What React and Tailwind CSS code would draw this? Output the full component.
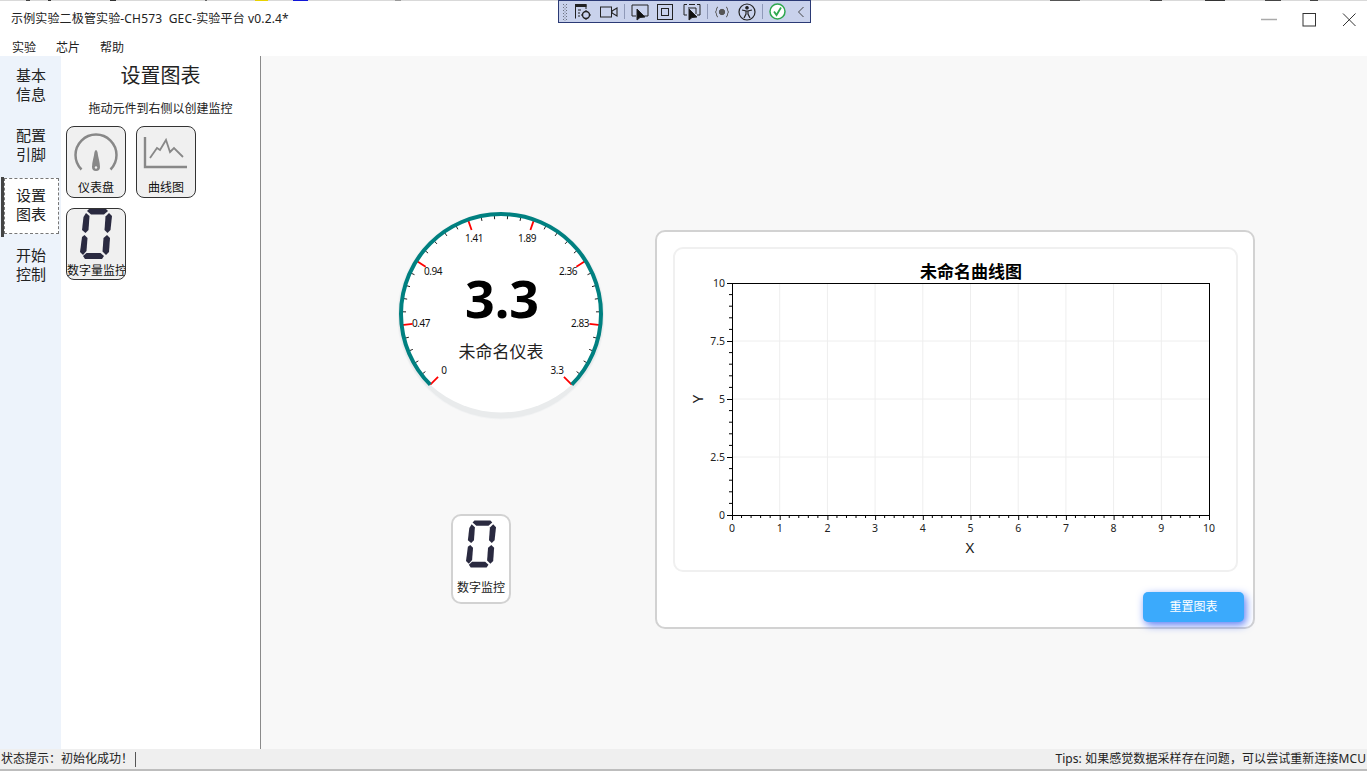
import React from 'react';

const FONT = { fontFamily: '"Noto Sans", "Noto Sans CJK SC", sans-serif' };

function Zero({ className }) {
  return (
    <svg viewBox="0 0 32 50" className={className} fill="#2a2a40">
      <polygon points="7,2 9,0 26,0 28,2 24,5.500 11,5.500" />
      <polygon points="3.500,8 6,4 9.500,7 8.500,21 5.500,24 2,21" />
      <polygon points="29,4 32,7 30.500,21 27.500,24 24.500,21 25.500,7.500" />
      <polygon points="2,28 4.500,26 7.500,29 6.500,42 3,46 0,43" />
      <polygon points="27,26 30,29 29,43 26,46 22.500,42.500 23.500,29" />
      <polygon points="3,47 6.500,44 20.500,44 24,47 22,50 5,50" />
    </svg>
  );
}

function GaugeIcon() {
  return (
    <svg width="48" height="42" viewBox="0 0 48 42" fill="none">
      <path d="M9.500 36.500 A20.500 20.500 0 1 1 38.500 36.500" stroke="#888" strokeWidth="2.500" />
      <path d="M22.500 19 Q24 15 25.500 19 C26 24 28 29 28 34 A4 4 0 0 1 20 34 C20 29 22 24 22.500 19 Z" fill="#888" />
      <circle cx="24" cy="34.500" r="1.200" fill="#f0f0f0" />
    </svg>
  );
}

function ChartIcon() {
  return (
    <svg width="48" height="36" viewBox="0 0 48 36" fill="none" stroke="#888">
      <path d="M3 4 V34 H45" strokeWidth="2.400" />
      <path d="M8 25 L15 15 L18 17 L24 7 L28 19 L32 15 L41 24" strokeWidth="1.800" />
    </svg>
  );
}

function ToolBar() {
  const stroke = { fill: 'none', stroke: '#222', strokeWidth: 1 };
  return (
    <div className="absolute left-[558px] top-0 z-10 flex h-[23px] w-[253px] items-center border border-[#2b3a75] bg-[#c9d2ec]">
      <svg width="8" height="18" viewBox="0 0 8 18" className="ml-[3px]" fill="#6b7280">
        {[1, 4, 7, 10, 13, 16].map((y) => (
          <g key={y}>
            <rect x="1" y={y} width="1" height="1" />
            <rect x="4" y={y} width="1" height="1" />
            <rect x="2.500" y={y + 1.500} width="1" height="1" />
          </g>
        ))}
      </svg>
      <svg width="18" height="18" viewBox="0 0 18 18" className="ml-[4px]" {...stroke}>
        <path d="M1.500 15.500 V1.500 H12 V6" />
        <rect x="1.500" y="1.500" width="10.500" height="2" fill="#222" />
        <path d="M4 7 H7 M4 10 H6 M4 13 H6" />
        <circle cx="12" cy="12" r="3.500" strokeWidth="1.400" />
        <path d="M12 7 V9 M12 15 V17 M7 12 H9 M15 12 H17" />
      </svg>
      <svg width="18" height="14" viewBox="0 0 18 14" className="ml-[8px]" {...stroke}>
        <rect x="0.500" y="2" width="11" height="10" />
        <path d="M12 6 L17 3 V11 L12 8 Z" strokeWidth="1.100" />
      </svg>
      <div className="ml-[6px] h-[15px] w-px bg-[#8f99b8]" />
      <svg width="18" height="18" viewBox="0 0 18 18" className="ml-[6px]" {...stroke}>
        <path d="M5 13 H1 V2 H17 V13 H12" />
        <path d="M6 6 V17 L9 14.500 L14 14 Z" fill="#111" />
      </svg>
      <svg width="16" height="16" viewBox="0 0 16 16" className="ml-[8px]" {...stroke}>
        <rect x="0.500" y="0.500" width="15" height="15" />
        <rect x="4.500" y="4.500" width="7" height="7" />
      </svg>
      <svg width="18" height="18" viewBox="0 0 18 18" className="ml-[10px]" {...stroke}>
        <path d="M4 1.500 H1 V12 H4 M14 1.500 H17 V12 H14 M6 1.500 H12" />
        <path d="M5 5 H13 V11" />
        <path d="M6 6 V17 L9 14.500 L14 14 Z" fill="#111" />
      </svg>
      <div className="ml-[6px] h-[15px] w-px bg-[#8f99b8]" />
      <svg width="14" height="12" viewBox="0 0 14 12" className="ml-[7px]" fill="none" stroke="#555">
        <path d="M3 1 C1 1 2 5 0.500 6 C2 7 1 11 3 11 M11 1 C13 1 12 5 13.500 6 C12 7 13 11 11 11" />
        <circle cx="7" cy="6" r="2.700" fill="#555" />
      </svg>
      <svg width="18" height="18" viewBox="0 0 18 18" className="ml-[9px]" {...stroke} strokeWidth="1.200">
        <circle cx="9" cy="9" r="8" />
        <circle cx="9" cy="4.800" r="1.200" fill="#222" />
        <path d="M4 7 L8 8 V11 L6 15 M14 7 L10 8 V11 L12 15 M8 8 H10" />
      </svg>
      <div className="ml-[6px] h-[15px] w-px bg-[#8f99b8]" />
      <svg width="17" height="17" viewBox="0 0 17 17" className="ml-[6px]" fill="none">
        <circle cx="8.500" cy="8.500" r="7.500" fill="#fff" stroke="#2fa84f" strokeWidth="1.500" />
        <path d="M5 8.500 L7.500 12 L12 4.500" stroke="#2fa84f" strokeWidth="1.800" />
      </svg>
      <svg width="8" height="12" viewBox="0 0 8 12" className="ml-[11px]" fill="none" stroke="#444">
        <path d="M6.500 1 L1.500 6 L6.500 11" />
      </svg>
    </div>
  );
}

function TopStrip() {
  const bits = [
    [26, 4, '#444'], [48, 3, '#333'], [110, 6, '#333'], [205, 2, '#666'],
    [255, 13, '#e8d200'], [293, 15, '#1016d8'], [395, 6, '#999'],
    [1050, 30, '#555'], [1150, 12, '#444'], [1205, 20, '#333'], [1265, 16, '#444'], [1310, 8, '#444'],
  ];
  return (
    <div className="flex h-px bg-[#d9d9d9]">
      {bits.map(([x, w, c], i) => (
        <div
          key={x}
          style={{ marginLeft: i === 0 ? x : x - bits[i - 1][0] - bits[i - 1][1], width: w, background: c }}
        />
      ))}
    </div>
  );
}

function TitleBar() {
  return (
    <div className="flex h-[37px] items-center bg-white pl-[11px] text-[12px] text-[#222]">
      <span className="-mt-[1px] tracking-[0.15px]">示例实验二极管实验-CH573&nbsp;&nbsp;GEC-实验平台 v0.2.4*</span>
      <div className="ml-auto flex items-center">
        <svg width="127" height="36" viewBox="0 0 127 36" fill="none">
          <path d="M21 17.500 H37" stroke="#aaa" strokeWidth="1.500" />
          <rect x="63" y="11.500" width="12.500" height="12.500" stroke="#333" />
          <path d="M103 11.500 L115.500 24 M115.500 11.500 L103 24" stroke="#333" />
        </svg>
      </div>
    </div>
  );
}

function Menu() {
  return (
    <div className="flex h-[18px] items-center gap-[20px] bg-white pl-[12px] pt-[2px] text-[12px] text-[#222]">
      <span>实验</span>
      <span>芯片</span>
      <span>帮助</span>
    </div>
  );
}

function Rail() {
  const items = [['基本', '信息'], ['配置', '引脚'], ['设置', '图表'], ['开始', '控制']];
  return (
    <div className="w-[61px] shrink-0 bg-[#edf3fb] pt-px">
      {items.map(([a, b], i) => (
        <div key={a} className="h-[60px] text-[15px] leading-[19px] text-[#222]">
          {i === 2 ? (
            <div className="relative ml-[1px] flex h-[60px] items-center">
              <div className="h-full w-[3px] bg-[#444]" />
              <div className="mb-[2px] h-[56px] w-[55px] border border-dashed border-[#777] bg-white pl-[11px] pt-[7px]">
                {a}<br />{b}
              </div>
            </div>
          ) : (
            <div className="pl-[16px] pt-[9px]">{a}<br />{b}</div>
          )}
        </div>
      ))}
    </div>
  );
}

function Tool({ label, children, tight }) {
  return (
    <div className="relative flex h-[72px] w-[60px] flex-col items-center overflow-hidden rounded-[8px] border border-[#333] bg-[#f0f0f0]">
      <div className={tight ? 'mt-0' : 'mt-[6px]'}>{children}</div>
      <span className={`absolute w-full whitespace-nowrap text-center text-[12px] leading-[16px] text-[#111] ${tight ? 'bottom-0' : 'bottom-[1px]'}`}>
        {label}
      </span>
    </div>
  );
}

function Panel() {
  return (
    <div className="w-[200px] shrink-0 border-r border-[#8a8a8a] bg-white">
      <div className="pt-[6px] text-center text-[20px] leading-[27px] text-[#222]">设置图表</div>
      <div className="mt-[12px] text-center text-[12px] leading-[16px] text-[#222]">拖动元件到右侧以创建监控</div>
      <div className="ml-[5px] mt-[9px] flex flex-wrap gap-[10px]">
        <Tool label="仪表盘"><GaugeIcon /></Tool>
        <Tool label="曲线图"><ChartIcon /></Tool>
        <Tool label="数字量监控" tight><Zero className="h-[50px] w-[32px]" /></Tool>
      </div>
    </div>
  );
}

function Gauge() {
  const cx = 103;
  const cy = 102;
  const pos = (deg, r) => {
    const a = (deg * Math.PI) / 180;
    return [cx + r * Math.cos(a), cy - r * Math.sin(a)];
  };
  const step = 270 / 7;
  const labels = [
    ['0', 46, 158], ['0.47', 23, 111], ['0.94', 35, 59], ['1.41', 76, 26],
    ['1.89', 129, 26], ['2.36', 170, 59], ['2.83', 182, 111], ['3.3', 159, 158],
  ];
  const ticks = [];
  for (let i = 0; i <= 35; i++) {
    const deg = 225 - (i * step) / 5;
    const major = i % 5 === 0;
    const [x1, y1] = pos(deg, 100);
    const [x2, y2] = pos(deg, major ? 89 : 95);
    ticks.push(
      <line key={i} x1={x1} y1={y1} x2={x2} y2={y2} stroke={major ? '#f00' : '#222'} strokeWidth={major ? 1.800 : 1} />
    );
  }
  const [sx, sy] = pos(225, 100);
  const [ex, ey] = pos(-45, 100);
  return (
    <svg width="206" height="208" viewBox="0 0 206 208" className="block">
      <circle cx={cx} cy={cy + 1.500} r="104" fill="#f2f3f4" />
      <circle cx={cx} cy={cy + 1.500} r="103" fill="#e9ebec" />
      <path d={`M${sx} ${sy} A100 100 0 1 1 ${ex} ${ey} A104 104 0 0 1 ${sx} ${sy} Z`} fill="#fff" />
      {ticks}
      <path d={`M${sx} ${sy} A100 100 0 1 1 ${ex} ${ey}`} fill="none" stroke="#008080" strokeWidth="4" />
      {labels.map(([t, x, y]) => (
        <text key={t} x={x} y={y} textAnchor="middle" dominantBaseline="central" fontSize="10" letterSpacing="-0.4" fill="#111">{t}</text>
      ))}
      <text x={cx + 1} y="85" textAnchor="middle" dominantBaseline="central" fontSize="52" fontWeight="700" fill="#000">3.3</text>
      <text x={cx} y="139" textAnchor="middle" dominantBaseline="central" fontSize="17" fill="#222">未命名仪表</text>
    </svg>
  );
}

function Digital() {
  return (
    <div className="flex h-[90px] w-[60px] flex-col items-center rounded-[10px] border-2 border-[#d2d2d2] bg-white">
      <Zero className="mt-[4px] h-[48px] w-[30px]" />
      <span className="mt-[12px] text-[12px] leading-[16px] text-[#222]">数字监控</span>
    </div>
  );
}

function Plot() {
  const x0 = 57;
  const x1 = 534;
  const y0 = 266;
  const y1 = 34;
  const xs = Array.from({ length: 11 }, (_, i) => x0 + (i * (x1 - x0)) / 10);
  const ys = Array.from({ length: 5 }, (_, i) => y0 - (i * (y0 - y1)) / 4);
  const yText = ['0', '2.5', '5', '7.5', '10'];
  const minorX = [];
  for (let i = 0; i <= 50; i++) if (i % 5) minorX.push(x0 + (i * (x1 - x0)) / 50);
  const minorY = [];
  for (let i = 0; i <= 20; i++) if (i % 5) minorY.push(y0 - (i * (y0 - y1)) / 20);
  return (
    <svg width="560" height="320" viewBox="0 0 560 320" className="block">
      <text x="296" y="22" textAnchor="middle" dominantBaseline="central" fontSize="17" fontWeight="700" fill="#000">未命名曲线图</text>
      {xs.slice(1, -1).map((x) => <line key={x} x1={x} x2={x} y1={y1} y2={y0} stroke="#eee" />)}
      {ys.slice(1, -1).map((y) => <line key={y} x1={x0} x2={x1} y1={y} y2={y} stroke="#eee" />)}
      <rect x={x0 + 0.500} y={y1 + 0.500} width={x1 - x0} height={y0 - y1} fill="none" stroke="#000" />
      {xs.map((x, i) => (
        <g key={x}>
          <line x1={x + 0.500} x2={x + 0.500} y1={y0} y2={y0 + 5} stroke="#000" />
          <text x={x} y={y0 + 13} textAnchor="middle" dominantBaseline="central" fontSize="10.500" fill="#222">{i}</text>
        </g>
      ))}
      {minorX.map((x) => <line key={x} x1={x} x2={x} y1={y0} y2={y0 + 3} stroke="#000" />)}
      {ys.map((y, i) => (
        <g key={y}>
          <line x1={x0 - 5} x2={x0} y1={y + 0.500} y2={y + 0.500} stroke="#000" />
          <text x={x0 - 7} y={y} textAnchor="end" dominantBaseline="central" fontSize="10.500" fill="#222">{yText[i]}</text>
        </g>
      ))}
      {minorY.map((y) => <line key={y} x1={x0 - 3} x2={x0} y1={y} y2={y} stroke="#000" />)}
      <text x="295" y="298" textAnchor="middle" dominantBaseline="central" fontSize="15" fill="#222">X</text>
      <text x="22" y="150" textAnchor="middle" dominantBaseline="central" fontSize="15" fill="#222" transform="rotate(-90 22 150)">Y</text>
    </svg>
  );
}

function ChartCard() {
  return (
    <div className="flex h-[399px] w-[600px] flex-col rounded-[10px] border-2 border-[#d2d2d2] bg-white pl-[16px] pt-[15px]">
      <div className="h-[325px] w-[565px] overflow-hidden rounded-[10px] border-2 border-[#f0f0f0]">
        <Plot />
      </div>
      <div className="flex justify-end pr-[9px] pt-[20px]">
        <button className="h-[30px] w-[101px] rounded-[5px] bg-[#3baafc] text-[12px] text-white shadow-[2px_3px_8px_#5a7cf5]">
          重置图表
        </button>
      </div>
    </div>
  );
}

function Canvas() {
  return (
    <div className="flex flex-1 items-start bg-[#f8f8f8] pl-[137px] pt-[156px]">
      <div className="flex w-[257px] shrink-0 flex-col">
        <Gauge />
        <div className="ml-[53px] mt-[94px]">
          <Digital />
        </div>
      </div>
      <div className="mt-[18px]">
        <ChartCard />
      </div>
    </div>
  );
}

function StatusBar() {
  return (
    <div className="flex h-[20px] items-center justify-between bg-[#efefef] pl-[1px] pr-[1px] text-[12px] text-[#222]">
      <div className="flex items-center">
        <span>状态提示：初始化成功！</span>
        <div className="ml-[2px] h-[15px] w-px bg-[#555]" />
      </div>
      <span className="tracking-[0.07px]">Tips: 如果感觉数据采样存在问题，可以尝试重新连接MCU</span>
    </div>
  );
}

export default function App() {
  return (
    <div className="relative flex h-[771px] w-[1367px] flex-col overflow-hidden bg-white" style={FONT}>
      <TopStrip />
      <ToolBar />
      <TitleBar />
      <Menu />
      <div className="flex h-[693px]">
        <Rail />
        <Panel />
        <Canvas />
      </div>
      <StatusBar />
      <div className="h-[2px] bg-[#bdbdbd]" />
    </div>
  );
}
